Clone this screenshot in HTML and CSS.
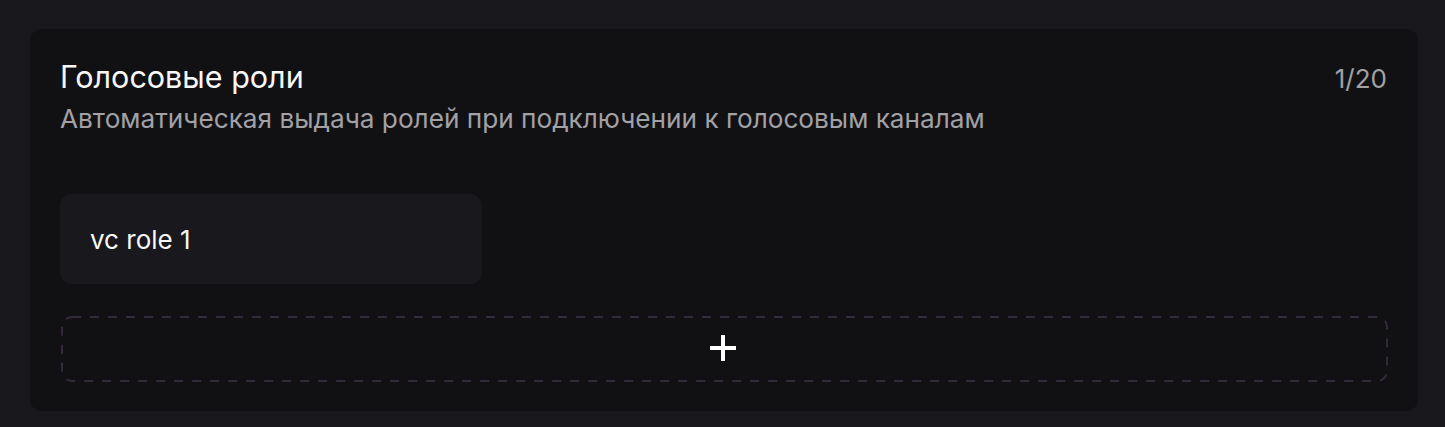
FILE: index.html
```html
<!DOCTYPE html>
<html lang="ru">
<head>
<meta charset="utf-8">
<link rel="stylesheet" href="styles.css">
</head>
<body>
<section class="card">
  <header class="card-head">
    <div class="head-text">
      <h2 class="title">Голосовые роли</h2>
      <p class="subtitle">Автоматическая выдача ролей при подключении к голосовым каналам</p>
    </div>
    <span class="counter">1/20</span>
  </header>
  <div class="roles">
    <div class="role-chip">vc role 1</div>
  </div>
  <button class="add-btn" type="button" aria-label="Добавить">
    <svg class="dash" aria-hidden="true"><rect class="dash-rect" rx="10" ry="10"/></svg>
    <svg class="plus" width="26" height="26" viewBox="0 0 26 26" shape-rendering="crispEdges"><path d="M11 0h4v26h-4zM0 11h26v4H0z" fill="#fff"/></svg>
  </button>
</section>
</body>
</html>
```
FILE: styles.css
```css
* { box-sizing: border-box; }
html, body { margin: 0; }
body {
  background: #18171c;
  padding: 29px 27px 0 30px;
  font-family: Inter, "Noto Sans", sans-serif;
  color: #fff;
}
.card {
  background: #111113;
  border-radius: 12px;
  padding: 30px 30px 29px 30px;
}
.card-head {
  display: flex;
  justify-content: space-between;
  align-items: baseline;
}
.title {
  margin: 0;
  font-size: 30.5px;
  font-weight: 400;
  line-height: 36px;
  color: #f7f7f8;
}
.subtitle {
  margin: 7px 0 0;
  font-size: 26.2px;
  line-height: 34px;
  color: #a1a1a6;
}
.counter {
  font-size: 26px;
  line-height: 36px;
  color: #a1a1a6;
  padding-right: 1px;
}
.roles {
  margin-top: 58px;
  display: flex;
}
.role-chip {
  width: 422px;
  height: 90px;
  background: #19181d;
  border-radius: 12px;
  padding: 0 30px;
  display: flex;
  align-items: center;
  font-size: 26px;
  color: #f7f7f8;
}
.add-btn {
  position: relative;
  margin: 32px 0 0 1px;
  width: calc(100% - 1px);
  height: 66px;
  background: transparent;
  border: 0;
  display: flex;
  align-items: center;
  justify-content: center;
  padding: 0;
}
.dash {
  position: absolute;
  inset: 0;
  width: 100%;
  height: 100%;
}
.dash-rect {
  x: 1px;
  y: 1px;
  width: calc(100% - 2px);
  height: calc(100% - 2px);
  fill: none;
  stroke: #35293c;
  stroke-width: 2;
  stroke-dasharray: 9 9;
}
.plus { display: block; position: relative; margin-left: -3px; margin-top: -2px; }
```
